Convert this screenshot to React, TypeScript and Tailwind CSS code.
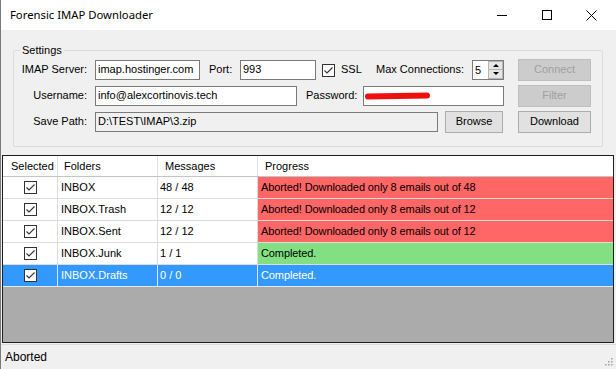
import React from 'react';

type Row = {
  folder: string;
  messages: string;
  progress: string;
  state: 'error' | 'done';
  selected?: boolean;
};

const rows: Row[] = [
  { folder: 'INBOX', messages: '48 / 48', progress: 'Aborted! Downloaded only 8 emails out of 48', state: 'error' },
  { folder: 'INBOX.Trash', messages: '12 / 12', progress: 'Aborted! Downloaded only 8 emails out of 12', state: 'error' },
  { folder: 'INBOX.Sent', messages: '12 / 12', progress: 'Aborted! Downloaded only 8 emails out of 12', state: 'error' },
  { folder: 'INBOX.Junk', messages: '1 / 1', progress: 'Completed.', state: 'done' },
  { folder: 'INBOX.Drafts', messages: '0 / 0', progress: 'Completed.', state: 'done', selected: true },
];

function CheckBox() {
  return (
    <svg width="13" height="13" viewBox="0 0 13 13" className="shrink-0">
      <rect x="0.5" y="0.5" width="12" height="12" fill="#fff" stroke="#333" />
      <path d="M2.5 6.5 L5 9 L10.5 3.5" fill="none" stroke="#333" strokeWidth="1.1" />
    </svg>
  );
}

function TextBox({ w, value, readOnly }: { w: string; value: string; readOnly?: boolean }) {
  return (
    <div
      className={`${w} h-[20px] border border-[#7a7a7a] flex items-center pl-[2px] whitespace-nowrap overflow-hidden ${
        readOnly ? 'bg-[#f0f0f0]' : 'bg-white'
      }`}
    >
      {value}
    </div>
  );
}

function Button({ w, label, disabled }: { w: string; label: string; disabled?: boolean }) {
  return (
    <div
      className={`${w} h-[22px] flex items-center justify-center border ${
        disabled ? 'bg-[#cccccc] border-[#bfbfbf] text-[#a0a0a0]' : 'bg-[#e1e1e1] border-[#adadad] text-black'
      }`}
    >
      {label}
    </div>
  );
}

export default function App() {
  return (
    <div className="w-[616px] h-[369px] flex flex-col bg-[#f0f0f0] border-l border-[#7a7a7a] overflow-hidden text-[11px] text-black font-['Liberation_Sans',Arial,sans-serif]">
      {/* Title bar */}
      <div className="h-[30px] shrink-0 bg-white flex items-center">
        <span className="pl-[9px] text-[11.3px] font-['Noto_Sans',sans-serif]">Forensic IMAP Downloader</span>
        <div className="ml-auto mr-[2px] flex">
          <div className="w-[45px] h-[30px] flex items-center justify-center">
            <div className="w-[10px] h-px bg-black" />
          </div>
          <div className="w-[45px] h-[30px] flex items-center justify-center">
            <div className="w-[10px] h-[10px] border border-black" />
          </div>
          <div className="w-[45px] h-[30px] flex items-center justify-center">
            <svg width="11" height="11" viewBox="0 0 11 11">
              <path d="M0.5 0.5 L10.5 10.5 M10.5 0.5 L0.5 10.5" stroke="#000" strokeWidth="1" />
            </svg>
          </div>
        </div>
      </div>

      {/* Settings */}
      <fieldset className="ml-[12px] mr-[13px] mt-[13px] border border-[#dcdcdc] rounded-[2px] pt-[2px] pb-[14px] shrink-0">
        <legend className="ml-[6px] px-[2px] leading-[14px]">Settings</legend>

        <div className="flex items-center h-[21px]">
          <div className="w-[81px] text-right pr-[8px]">IMAP Server:</div>
          <TextBox w="w-[105px]" value="imap.hostinger.com" />
          <div className="ml-[9px] w-[31px]">Port:</div>
          <TextBox w="w-[76px]" value="993" />
          <div className="ml-[6px] pt-px">
            <CheckBox />
          </div>
          <div className="ml-[6px] w-[35px]">SSL</div>
          <div className="w-[96px]">Max Connections:</div>
          <div className="w-[32px] h-[20px] border border-[#7a7a7a] bg-white flex">
            <span className="flex-1 pl-[2px] leading-[18px]">5</span>
            <div className="w-[15px] flex flex-col">
              <div className="h-[9px] bg-[#e6e6e6] border border-[#b5b5b5] flex items-center justify-center">
                <div className="w-0 h-0 border-l-[3px] border-r-[3px] border-b-[3px] border-l-transparent border-r-transparent border-b-black" />
              </div>
              <div className="h-[9px] bg-[#e6e6e6] border border-t-0 border-[#b5b5b5] flex items-center justify-center">
                <div className="w-0 h-0 border-l-[3px] border-r-[3px] border-t-[3px] border-l-transparent border-r-transparent border-t-black" />
              </div>
            </div>
          </div>
          <div className="ml-[14px]">
            <Button w="w-[73px]" label="Connect" disabled />
          </div>
        </div>

        <div className="flex items-center h-[21px] mt-[5px]">
          <div className="w-[81px] text-right pr-[8px]">Username:</div>
          <TextBox w="w-[202px]" value="info@alexcortinovis.tech" />
          <div className="ml-[9px] w-[57px]">Password:</div>
          <div className="relative">
            <TextBox w="w-[141px]" value="" />
            <div className="absolute left-[2px] top-[7px] w-[65px] h-[6px] rounded-full bg-[#ee1010] -rotate-1" />
          </div>
          <div className="ml-[14px]">
            <Button w="w-[73px]" label="Filter" disabled />
          </div>
        </div>

        <div className="flex items-center h-[21px] mt-[5px]">
          <div className="w-[81px] text-right pr-[8px]">Save Path:</div>
          <TextBox w="w-[343px]" value="D:\TEST\IMAP\3.zip" readOnly />
          <div className="ml-[7px]">
            <Button w="w-[58px]" label="Browse" />
          </div>
          <div className="ml-[15px]">
            <Button w="w-[73px]" label="Download" />
          </div>
        </div>
      </fieldset>

      {/* Folder grid */}
      <div className="ml-[1px] mr-[2px] mt-[8px] flex-1 border border-[#1e1e1e] bg-[#ababab] flex flex-col">
        <div className="h-[21px] shrink-0 bg-white flex border-b border-[#c4c4c4]">
          <div className="w-[55px] border-r border-[#e3e3e3] pl-[8px] flex items-center">Selected</div>
          <div className="w-[100px] border-r border-[#e3e3e3] pl-[6px] flex items-center">Folders</div>
          <div className="w-[100px] border-r border-[#e3e3e3] pl-[7px] flex items-center">Messages</div>
          <div className="flex-1 pl-[7px] flex items-center">Progress</div>
        </div>
        {rows.map((r) => {
          const line = r.selected ? 'border-[#dbe9fb]' : 'border-[#dcdcdc]';
          const cell = r.selected ? 'bg-[#3399ff] text-white' : 'bg-white';
          const progress = r.selected
            ? 'bg-[#3399ff] text-white'
            : r.state === 'error'
            ? 'bg-[#ff6666]'
            : 'bg-[#82e082]';
          return (
            <div key={r.folder} className={`h-[22px] shrink-0 flex border-b ${line}`}>
              <div className={`w-[55px] border-r ${line} ${cell} flex items-center justify-center`}>
                <CheckBox />
              </div>
              <div className={`w-[100px] border-r ${line} ${cell} pl-[3px] flex items-center`}>{r.folder}</div>
              <div className={`w-[100px] border-r ${line} ${cell} pl-[2px] flex items-center`}>{r.messages}</div>
              <div className={`flex-1 ${progress} pl-[3px] flex items-center tracking-[-0.1px]`}>{r.progress}</div>
            </div>
          );
        })}
      </div>

      {/* Status bar */}
      <div className="mt-[1px] h-[25px] shrink-0 border-t border-[#dadada] flex items-center pl-[4px] relative">
        <span className="text-[12px]">Aborted</span>
        <svg className="absolute right-[3px] bottom-[3px]" width="9" height="9" viewBox="0 0 9 9">
          <rect x="7" y="1" width="1.5" height="1.5" fill="#a0a0a0" />
          <rect x="4" y="4" width="1.5" height="1.5" fill="#a0a0a0" />
          <rect x="7" y="4" width="1.5" height="1.5" fill="#a0a0a0" />
          <rect x="1" y="7" width="1.5" height="1.5" fill="#a0a0a0" />
          <rect x="4" y="7" width="1.5" height="1.5" fill="#a0a0a0" />
          <rect x="7" y="7" width="1.5" height="1.5" fill="#a0a0a0" />
        </svg>
      </div>
    </div>
  );
}
